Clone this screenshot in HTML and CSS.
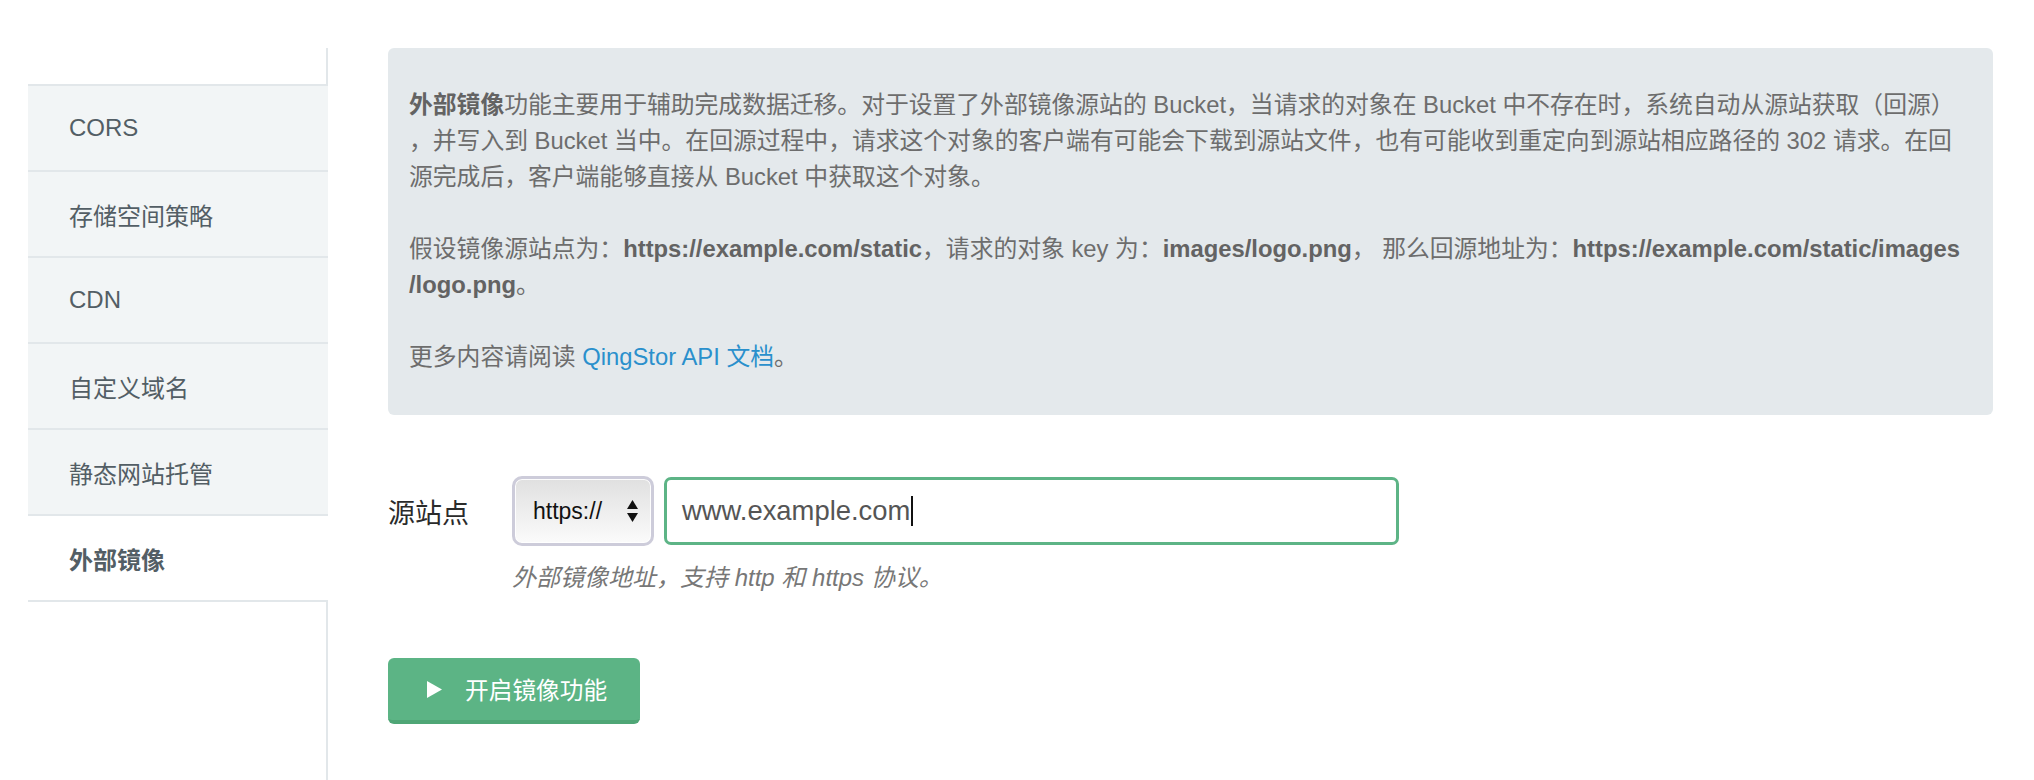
FILE: index.html
```html
<!DOCTYPE html>
<html lang="zh-CN">
<head>
<meta charset="utf-8">
<title>外部镜像</title>
<link rel="stylesheet" href="styles.css">
</head>
<body>
<div class="page">
  <aside class="sidebar">
    <div class="side-top"></div>
    <ul class="nav">
      <li class="nav-item">CORS</li>
      <li class="nav-item">存储空间策略</li>
      <li class="nav-item">CDN</li>
      <li class="nav-item">自定义域名</li>
      <li class="nav-item">静态网站托管</li>
      <li class="nav-item active">外部镜像</li>
    </ul>
    <div class="side-fill"></div>
  </aside>
  <main class="main">
    <section class="info">
      <p><b>外部镜像</b>功能主要用于辅助完成数据迁移。对于设置了外部镜像源站的 Bucket，当请求的对象在 Bucket 中不存在时，系统自动从源站获取（回源）<br>，并写入到 Bucket 当中。在回源过程中，请求这个对象的客户端有可能会下载到源站文件，也有可能收到重定向到源站相应路径的 302 请求。在回<br>源完成后，客户端能够直接从 Bucket 中获取这个对象。</p>
      <p>假设镜像源站点为：<b>https://example.com/static</b>，请求的对象 key 为：<b>images/logo.png</b>，&nbsp;那么回源地址为：<b>https://example.com/static/images<br>/logo.png</b>。</p>
      <p>更多内容请阅读 <a class="link" href="#">QingStor API 文档</a>。</p>
    </section>
    <div class="form-row">
      <span class="label">源站点</span>
      <div class="select">
        <span>https://</span>
        <svg class="arrows" width="11" height="22" viewBox="0 0 11 22"><polygon points="5.5,0 11,9 0,9" fill="#111"/><polygon points="0,13 11,13 5.5,22" fill="#111"/></svg>
      </div>
      <div class="input"><span>www.example.com</span><span class="caret"></span></div>
    </div>
    <div class="hint">外部镜像地址，支持 http 和 https 协议。</div>
    <button class="btn" type="button">
      <svg width="15" height="17" viewBox="0 0 15 17"><polygon points="0,0 15,8.5 0,17" fill="#fff"/></svg>
      <span>开启镜像功能</span>
    </button>
  </main>
</div>
</body>
</html>
```
FILE: styles.css
```css
html, body {
  margin: 0;
  padding: 0;
  background: #fff;
  font-family: "Liberation Sans", "Noto Sans CJK SC", sans-serif;
  height: 100%;
  overflow: hidden;
}

.page {
  display: flex;
  align-items: stretch;
  box-sizing: border-box;
  height: 100vh;
  padding: 48px 0 0 28px;
}

.sidebar {
  width: 300px;
  flex-shrink: 0;
  display: flex;
  flex-direction: column;
}

.side-top {
  height: 36px;
  border-right: 2px solid #e2e7ea;
}

.nav {
  list-style: none;
  margin: 0;
  padding: 0;
  border-top: 2px solid #e2e7ea;
}

.nav-item {
  height: 86px;
  box-sizing: border-box;
  display: flex;
  align-items: center;
  padding-left: 41px;
  border-bottom: 2px solid #e2e7ea;
  background: #f2f5f6;
  color: #535e65;
  font-size: 24px;
}

.nav-item.active {
  background: #fff;
  font-weight: 700;
}

.side-fill {
  flex: 1;
  border-right: 2px solid #e2e7ea;
}

.main {
  margin-left: 60px;
  width: 1605px;
  flex-shrink: 0;
}

.info {
  background: #e4e9ec;
  border-radius: 6px;
  padding: 39px 21px 40px;
  font-size: 23.8px;
  line-height: 36px;
  color: #6d6d6d;
}

.info p {
  margin: 0 0 36px;
  white-space: nowrap;
}

.info p:last-child {
  margin-bottom: 0;
}

.info b {
  color: #636363;
  font-weight: 700;
}

.link {
  color: #2a90cc;
  text-decoration: none;
}

.form-row {
  display: flex;
  align-items: center;
  margin-top: 61px;
}

.label {
  width: 124px;
  font-size: 27px;
  color: #2b2b2b;
}

.select {
  width: 142px;
  height: 70px;
  box-sizing: border-box;
  border: 3px solid #cdccda;
  border-radius: 10px;
  background: linear-gradient(#e0e0e0, #efefef 55%, #fbfbfb);
  box-shadow: inset 0 0 0 1px rgba(255, 255, 255, 0.9);
  display: flex;
  align-items: center;
  justify-content: space-between;
  padding: 0 13px 0 18px;
  font-size: 23px;
  color: #111;
}

.arrows {
  display: block;
}

.input {
  margin-left: 10px;
  width: 735px;
  height: 68px;
  box-sizing: border-box;
  border: 3px solid #5db486;
  border-radius: 7px;
  padding-left: 15px;
  display: flex;
  align-items: center;
  font-size: 27.4px;
  color: #555;
}

.caret {
  display: inline-block;
  width: 2px;
  height: 30px;
  margin-left: 1px;
  background: #111;
}

.hint {
  margin: 16px 0 0 124px;
  font-size: 24px;
  line-height: 32px;
  font-style: italic;
  color: #777;
}

.btn {
  margin-top: 64px;
  width: 252px;
  height: 66px;
  box-sizing: border-box;
  border: none;
  border-bottom: 4px solid #4fa676;
  border-radius: 6px;
  background: #5cb485;
  color: #fff;
  display: flex;
  align-items: center;
  gap: 23px;
  padding: 0 0 0 39px;
  font-family: "Liberation Sans", "Noto Sans CJK SC", sans-serif;
  font-size: 23.7px;
  font-weight: 400;
  cursor: pointer;
}

.btn svg {
  display: block;
}
```
